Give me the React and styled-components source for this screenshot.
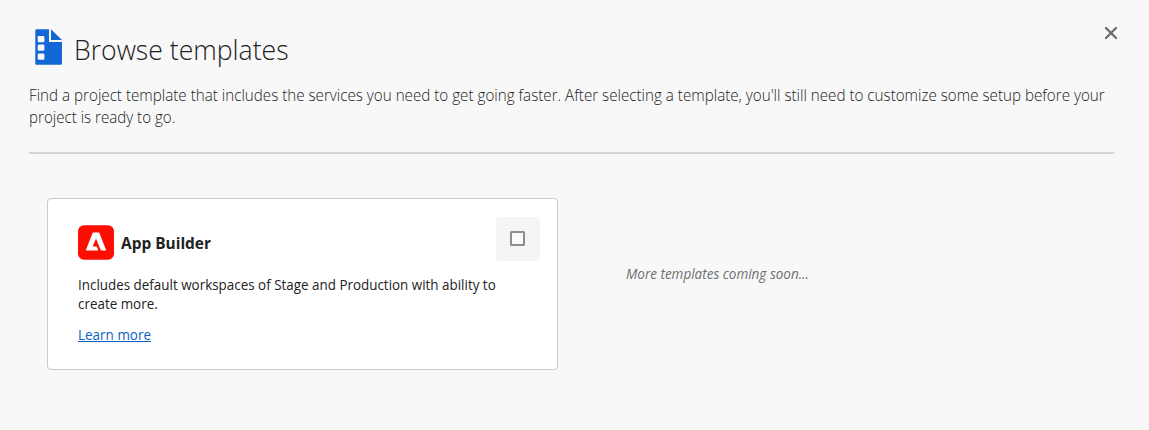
import React from 'react';
import styled, { createGlobalStyle } from 'styled-components';

const Global = createGlobalStyle`
  * { box-sizing: border-box; }
  body { margin: 0; background: #f8f8f8; font-family: "Open Sans", "Noto Sans", sans-serif; color: #222; }
  h1, h2, p { margin: 0; }
`;

const Dialog = styled.main`
  height: 430px;
  padding: 25px 28px 0 29px;
  background: #f8f8f8;
  overflow: hidden;
`;
const Header = styled.header`
  display: flex;
  justify-content: space-between;
  align-items: flex-start;
  height: 59px;
`;
const TitleGroup = styled.div`
  display: flex;
  padding: 4px 0 0 6px;
  gap: 11px;
`;
const Fit = styled.span`
  display: inline-block;
  white-space: nowrap;
  transform-origin: 0 50%;
  transform: scaleX(${p => p.$x || 1});
`;
const Title = styled.h1`
  font-size: 28px;
  line-height: 40px;
  font-weight: 300;
`;
const CloseButton = styled.button`
  border: 0;
  padding: 0;
  margin: 1px 3px 0 0;
  background: none;
  line-height: 0;
`;
const Intro = styled.p`
  height: 70px;
  font-size: 16px;
  line-height: 22px;
  font-weight: 300;
  border-bottom: 2px solid #d5d5d5;
  margin-right: 7px;
  display: flex;
  flex-direction: column;
  align-items: flex-start;
`;
const Templates = styled.section`
  display: flex;
  padding: 44px 0 0 18px;
  gap: 68px;
`;
const Card = styled.article`
  display: flex;
  justify-content: space-between;
  width: 511px;
  height: 172px;
  padding: 18px 17px 0 30px;
  border: 1px solid #cacaca;
  border-radius: 4px;
  background: #fff;
`;
const CardBody = styled.div`
  padding-top: 8px;
  width: 410px;
`;
const CardHeading = styled.div`
  display: flex;
  gap: 7px;
  height: 50px;
`;
const CardTitle = styled.h2`
  font-size: 16px;
  line-height: 36px;
  font-weight: 700;
`;
const Description = styled.p`
  display: flex;
  flex-direction: column;
  align-items: flex-start;
  font-size: 14px;
  line-height: 19px;
`;
const LearnMore = styled.a`
  display: block;
  margin-top: 12px;
  font-size: 14px;
  line-height: 19px;
  color: #0d5fc0;
  text-decoration: none;
`;
const LinkText = styled(Fit)`
  text-decoration: underline;
  text-decoration-thickness: 1px;
  text-underline-offset: 1px;
  text-decoration-skip-ink: none;
`;
const CheckTile = styled.label`
  display: flex;
  padding: 14px;
  flex: none;
  width: 44px;
  height: 44px;
  border-radius: 4px;
  background: #f5f5f5;
`;
const Box = styled.span`
  width: 15px;
  height: 15px;
  border: 2px solid #8e8e8e;
  border-radius: 1.5px;
  background: #fafafa;
`;
const Upcoming = styled.p`
  padding-top: 66px;
  font-size: 14px;
  line-height: 20px;
  font-style: italic;
  color: #6e6e6e;
`;

export default function App() {
  return (
    <Dialog>
      <Global />
      <Header>
        <TitleGroup>
          <svg width="28" height="36" viewBox="0 0 28 36">
            <path fill="#1266d5" d="M1.300 0.300H14V13H27V34.700Q27 35.700 26 35.700H1.300Q0.300 35.700 0.300 34.700V1.300Q0.300 0.300 1.300 0.300ZM16 0.300L27 11H16Z" />
            <g fill="#f8f8f8">
              <rect x="2.700" y="7" width="6.700" height="6.200" rx="1.200" />
              <rect x="2.700" y="15.600" width="6.700" height="6.200" rx="1.200" />
              <rect x="2.700" y="24.500" width="6.700" height="6.200" rx="1.200" />
            </g>
          </svg>
          <Title><Fit $x={0.95}>Browse templates</Fit></Title>
        </TitleGroup>
        <CloseButton aria-label="Close">
          <svg width="14" height="14" viewBox="0 0 14 14" stroke="#6e6e6e" strokeWidth="2.400" strokeLinecap="round">
            <path d="M2 2L12 12M12 2L2 12" />
          </svg>
        </CloseButton>
      </Header>
      <Intro>
        <Fit $x={0.9494}>Find a project template that includes the services you need to get going faster. After selecting a template, you'll still need to customize some setup before your</Fit>
        <Fit $x={0.945}>project is ready to go.</Fit>
      </Intro>
      <Templates>
        <Card>
          <CardBody>
            <CardHeading>
              <svg width="36" height="36" viewBox="0 0 36 36">
                <rect y="0.300" width="36" height="34.400" rx="6" fill="#fa0f00" />
                <path transform="translate(0 -0.600)" fill="#fff" d="M14.800 8h6.400L28.300 26H23.600Q22.800 26 22.500 25.300L18.300 14.800Q18 14.200 17.700 14.800L14.900 21.600Q14.800 22 15.200 22H18.200Q18.600 22 18.800 22.400L20.100 25.400Q20.200 26 19.700 26H7.700Z" />
              </svg>
              <CardTitle><Fit $x={0.964}>App Builder</Fit></CardTitle>
            </CardHeading>
            <Description>
              <Fit $x={0.958}>Includes default workspaces of Stage and Production with ability to</Fit>
              <Fit $x={0.958}>create more.</Fit>
            </Description>
            <LearnMore href="#"><LinkText $x={0.963}>Learn more</LinkText></LearnMore>
          </CardBody>
          <CheckTile><Box /></CheckTile>
        </Card>
        <Upcoming><Fit $x={0.964}>More templates coming soon...</Fit></Upcoming>
      </Templates>
    </Dialog>
  );
}
